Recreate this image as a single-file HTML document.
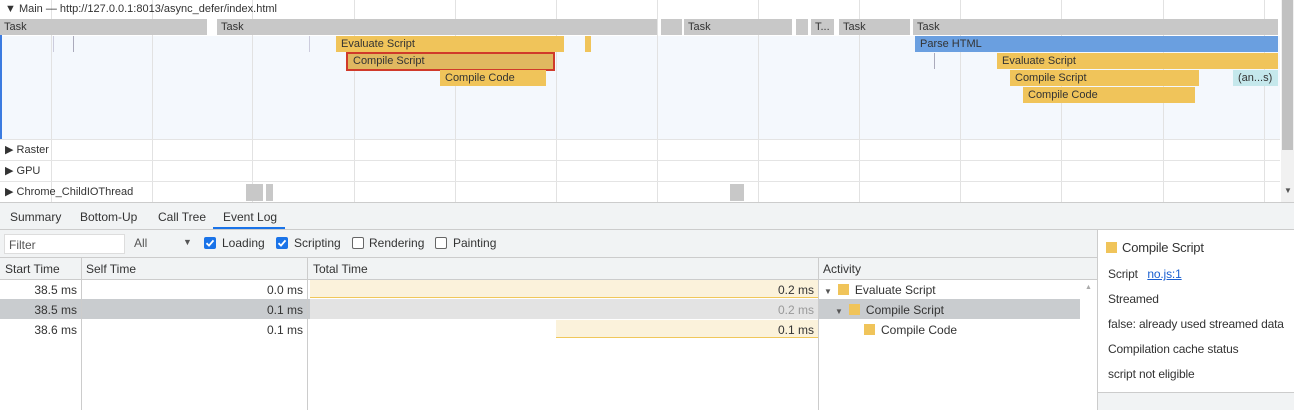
<!DOCTYPE html>
<html><head><meta charset="utf-8"><style>
*{margin:0;padding:0;box-sizing:border-box}
body{width:1294px;height:410px;overflow:hidden;background:#fff;font-family:"Liberation Sans",sans-serif;font-size:11px;color:#333;position:relative}
.a{position:absolute;white-space:nowrap}
.t{background:#c8c8c8;height:16px;top:19px;padding-left:4px;line-height:16px;color:#333;overflow:hidden}
.b{height:16px;line-height:16px;padding-left:5px;overflow:hidden;color:#333}
.y{background:#f0c45a}
.g{width:1px;top:0;height:202px;background:#e2e2e2}
.s{font-size:12px}
.d{font-size:12px;letter-spacing:-0.15px}
.sq{display:inline-block;width:11px;height:11px;background:#f0c45a;vertical-align:-1px;margin-right:6px}
.cb{width:12px;height:12px;border-radius:2px}
.on{background:#1a73e8}
.off{border:1px solid #666;background:#fff}
</style></head><body>
<div class="a" style="left:0;top:36px;width:1280px;height:103px;background:#f4f8fd"></div>
<div class="a" style="left:0;top:19px;width:2px;height:120px;background:#3b7be0"></div>
<div class="a g" style="left:51px"></div><div class="a g" style="left:152px"></div><div class="a g" style="left:252px"></div><div class="a g" style="left:354px"></div><div class="a g" style="left:455px"></div><div class="a g" style="left:556px"></div><div class="a g" style="left:657px"></div><div class="a g" style="left:758px"></div><div class="a g" style="left:859px"></div><div class="a g" style="left:960px"></div><div class="a g" style="left:1061px"></div><div class="a g" style="left:1163px"></div><div class="a g" style="left:1264px"></div>
<div class="a" style="left:0;top:139px;width:1280px;height:1px;background:#e4e4e4"></div>
<div class="a" style="left:0;top:160px;width:1280px;height:1px;background:#e4e4e4"></div>
<div class="a" style="left:0;top:181px;width:1280px;height:1px;background:#e4e4e4"></div>
<div class="a" style="left:0;top:202px;width:1294px;height:1px;background:#ccc"></div>
<div class="a" style="left:5px;top:3px;color:#333">▼ Main — http://127.0.0.1:8013/async_defer/index.html</div>
<div class="a t" style="left:0;width:207px">Task</div>
<div class="a t" style="left:217px;width:440px">Task</div>
<div class="a t" style="left:661px;width:21px"></div>
<div class="a t" style="left:684px;width:108px">Task</div>
<div class="a t" style="left:796px;width:12px"></div>
<div class="a t" style="left:811px;width:23px">T...</div>
<div class="a t" style="left:839px;width:71px">Task</div>
<div class="a t" style="left:913px;width:365px">Task</div>
<div class="a" style="left:53px;top:36px;width:1px;height:16px;background:#ccd"></div>
<div class="a" style="left:73px;top:36px;width:1px;height:16px;background:#aab"></div>
<div class="a" style="left:309px;top:36px;width:1px;height:16px;background:#ccd"></div>
<div class="a" style="left:934px;top:53px;width:1px;height:16px;background:#aab"></div>
<div class="a b y" style="left:336px;top:36px;width:228px">Evaluate Script</div>
<div class="a y" style="left:585px;top:36px;width:6px;height:16px"></div>
<div class="a b" style="left:346px;top:52px;width:209px;height:19px;background:#e0b860;border:2px solid #d03a2a;line-height:15px">Compile Script</div>
<div class="a b y" style="left:440px;top:70px;width:106px">Compile Code</div>
<div class="a b" style="left:915px;top:36px;width:363px;background:#6a9fe0">Parse HTML</div>
<div class="a b y" style="left:997px;top:53px;width:281px">Evaluate Script</div>
<div class="a b y" style="left:1010px;top:70px;width:189px">Compile Script</div>
<div class="a b" style="left:1233px;top:70px;width:45px;background:#c5e8ec">(an...s)</div>
<div class="a b y" style="left:1023px;top:87px;width:172px">Compile Code</div>
<div class="a" style="left:5px;top:143px">▶ Raster</div>
<div class="a" style="left:5px;top:164px">▶ GPU</div>
<div class="a" style="left:5px;top:185px">▶ Chrome_ChildIOThread</div>
<div class="a" style="left:246px;top:184px;width:17px;height:17px;background:#c8c8c8"></div>
<div class="a" style="left:266px;top:184px;width:7px;height:17px;background:#c8c8c8"></div>
<div class="a" style="left:730px;top:184px;width:14px;height:17px;background:#c8c8c8"></div>
<div class="a" style="left:1281px;top:0;width:13px;height:202px;background:#f1f1f1"></div>
<div class="a" style="left:1282px;top:0;width:11px;height:150px;background:#c1c1c1"></div>
<div class="a" style="left:1284px;top:186px;font-size:8px;color:#555">▼</div>
<div class="a" style="left:0;top:203px;width:1294px;height:207px;background:#f1f3f4"></div>
<div class="a s" style="left:10px;top:210px">Summary</div>
<div class="a s" style="left:80px;top:210px">Bottom-Up</div>
<div class="a s" style="left:158px;top:210px">Call Tree</div>
<div class="a s" style="left:223px;top:210px">Event Log</div>
<div class="a" style="left:213px;top:227px;width:72px;height:2px;background:#1a73e8"></div>
<div class="a" style="left:0;top:229px;width:1294px;height:1px;background:#ccc"></div>
<div class="a s" style="left:4px;top:234px;width:121px;height:20px;background:#fff;border:1px solid #ddd;padding:3px 4px;color:#555">Filter</div>
<div class="a s" style="left:134px;top:236px;color:#555">All</div>
<div class="a" style="left:183px;top:237px;font-size:9px;color:#555">▼</div>
<svg class="a" style="left:204px;top:237px" width="12" height="12"><rect width="12" height="12" rx="2" fill="#1a73e8"/><path d="M2.5 6.2 L5 8.6 L9.5 3.4" stroke="#fff" stroke-width="1.8" fill="none"/></svg>
<div class="a s" style="left:222px;top:236px">Loading</div>
<svg class="a" style="left:276px;top:237px" width="12" height="12"><rect width="12" height="12" rx="2" fill="#1a73e8"/><path d="M2.5 6.2 L5 8.6 L9.5 3.4" stroke="#fff" stroke-width="1.8" fill="none"/></svg>
<div class="a s" style="left:294px;top:236px">Scripting</div>
<div class="a cb off" style="left:352px;top:237px"></div>
<div class="a s" style="left:369px;top:236px">Rendering</div>
<div class="a cb off" style="left:435px;top:237px"></div>
<div class="a s" style="left:453px;top:236px">Painting</div>
<div class="a" style="left:0;top:257px;width:1097px;height:1px;background:#ccc"></div>
<div class="a" style="left:0;top:279px;width:1097px;height:131px;background:#fff"></div>
<div class="a" style="left:0;top:299px;width:1080px;height:20px;background:#c9cccf"></div>
<div class="a" style="left:310px;top:299px;width:508px;height:20px;background:#e3e3e3"></div>
<div class="a" style="left:310px;top:280px;width:508px;height:18px;background:#fbf2db;border-bottom:1px solid #f0c75a"></div>
<div class="a" style="left:556px;top:320px;width:262px;height:18px;background:#fbf2db;border-bottom:1px solid #f0c75a"></div>
<div class="a" style="left:0;top:279px;width:1097px;height:1px;background:#ccc"></div>
<div class="a" style="left:81px;top:258px;width:1px;height:152px;background:#ccc"></div>
<div class="a" style="left:307px;top:258px;width:1px;height:152px;background:#ccc"></div>
<div class="a" style="left:818px;top:258px;width:1px;height:152px;background:#ccc"></div>
<div class="a s" style="left:5px;top:262px">Start Time</div>
<div class="a s" style="left:86px;top:262px">Self Time</div>
<div class="a s" style="left:313px;top:262px">Total Time</div>
<div class="a s" style="left:823px;top:262px">Activity</div>
<div class="a s" style="left:0;width:77px;text-align:right;top:283px">38.5 ms</div>
<div class="a s" style="left:0;width:77px;text-align:right;top:303px">38.5 ms</div>
<div class="a s" style="left:0;width:77px;text-align:right;top:323px">38.6 ms</div>
<div class="a s" style="left:82px;width:221px;text-align:right;top:283px">0.0 ms</div>
<div class="a s" style="left:82px;width:221px;text-align:right;top:303px">0.1 ms</div>
<div class="a s" style="left:82px;width:221px;text-align:right;top:323px">0.1 ms</div>
<div class="a s" style="left:310px;width:504px;text-align:right;top:283px">0.2 ms</div>
<div class="a s" style="left:310px;width:504px;text-align:right;top:303px;color:#999">0.2 ms</div>
<div class="a s" style="left:310px;width:504px;text-align:right;top:323px">0.1 ms</div>
<div class="a s" style="left:824px;top:283px"><span style="font-size:8px;color:#555;margin-right:6px">▼</span><span class="sq"></span>Evaluate Script</div>
<div class="a s" style="left:835px;top:303px"><span style="font-size:8px;color:#555;margin-right:6px">▼</span><span class="sq"></span>Compile Script</div>
<div class="a s" style="left:864px;top:323px"><span class="sq"></span>Compile Code</div>
<div class="a" style="left:1085px;top:284px;font-size:7px;color:#aaa">▲</div>
<div class="a" style="left:1097px;top:230px;width:197px;height:163px;background:#fff;border-left:1px solid #ccc;border-bottom:1px solid #ccc"></div>
<div class="a" style="left:1097px;top:393px;width:1px;height:17px;background:#ccc"></div>
<div class="a" style="left:1106px;top:240px;font-size:13px;letter-spacing:-0.2px"><span class="sq" style="margin-right:5px"></span>Compile Script</div>
<div class="a d" style="left:1108px;top:267px">Script &nbsp; <span style="color:#1a5fd0;text-decoration:underline">no.js:1</span></div>
<div class="a d" style="left:1108px;top:292px">Streamed</div>
<div class="a d" style="left:1108px;top:317px">false: already used streamed data</div>
<div class="a d" style="left:1108px;top:342px">Compilation cache status</div>
<div class="a d" style="left:1108px;top:367px">script not eligible</div>
</body></html>
